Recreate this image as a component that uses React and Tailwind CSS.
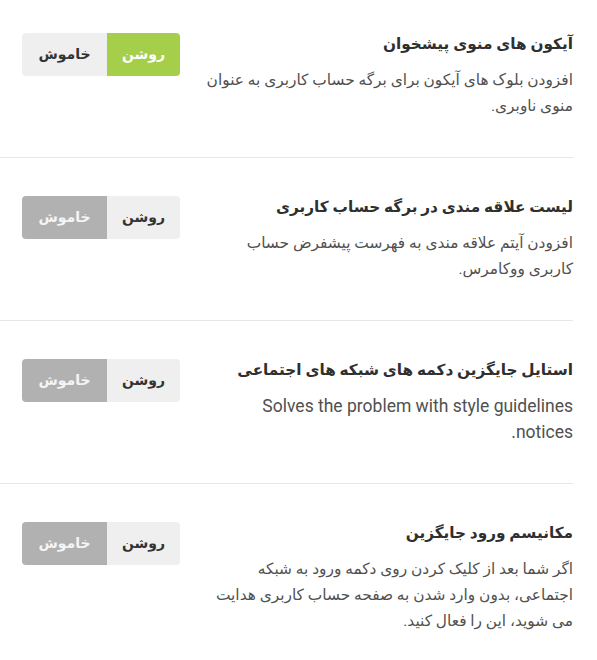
const settings = [
  {
    title: "آیکون های منوی پیشخوان",
    lines: ["افزودن بلوک های آیکون برای برگه حساب کاربری به عنوان", "منوی ناوبری."],
    on: true,
  },
  {
    title: "لیست علاقه مندی در برگه حساب کاربری",
    lines: ["افزودن آیتم علاقه مندی به فهرست پیشفرض حساب", "کاربری ووکامرس."],
    on: false,
  },
  {
    title: "استایل جایگزین دکمه های شبکه های اجتماعی",
    lines: ["Solves the problem with style guidelines", "notices."],
    latin: true,
    on: false,
  },
  {
    title: "مکانیسم ورود جایگزین",
    lines: [
      "اگر شما بعد از کلیک کردن روی دکمه ورود به شبکه",
      "اجتماعی، بدون وارد شدن به صفحه حساب کاربری هدایت",
      "می شوید، این را فعال کنید.",
    ],
    on: false,
  },
];

const Toggle = ({ on }) => (
  <div className="flex h-[43px] rounded-[4px] overflow-hidden text-[14px] font-bold shrink-0">
    <div
      className={`w-[73px] flex items-center justify-center ${
        on ? "bg-[#a5cf4b] text-white" : "bg-[#efefef] text-[#333]"
      }`}
    >
      روشن
    </div>
    <div
      className={`w-[85px] flex items-center justify-center ${
        on ? "bg-[#efefef] text-[#333]" : "bg-[#b1b1b1] text-[#f5f5f5]"
      }`}
    >
      خاموش
    </div>
  </div>
);

export default function App() {
  return (
    <div
      dir="rtl"
      className="bg-white min-h-screen w-[597px] pr-[24px]"
      style={{ fontFamily: 'Roboto, "DejaVu Sans", sans-serif' }}
    >
      {settings.map((s, i) => (
        <div
          key={i}
          className={`flex justify-between pl-[22px] pb-[38px] ${
            i === 0 ? "pt-[33px]" : "pt-[38px]"
          } ${i < settings.length - 1 ? "border-b border-[#e6e6e6]" : ""}`}
        >
          <div className="w-[380px]">
            <h3 className="text-[15.3px] leading-[22px] font-bold text-[#2f2f2f]">
              {s.title}
            </h3>
            <div
              className={`mt-[12px] leading-[26px] text-[#505050] ${
                s.latin ? "text-[17.5px]" : "text-[15.4px]"
              }`}
            >
              {s.lines.map((l, j) => (
                <p key={j} className="whitespace-nowrap">
                  {l}
                </p>
              ))}
            </div>
          </div>
          <Toggle on={s.on} />
        </div>
      ))}
    </div>
  );
}
